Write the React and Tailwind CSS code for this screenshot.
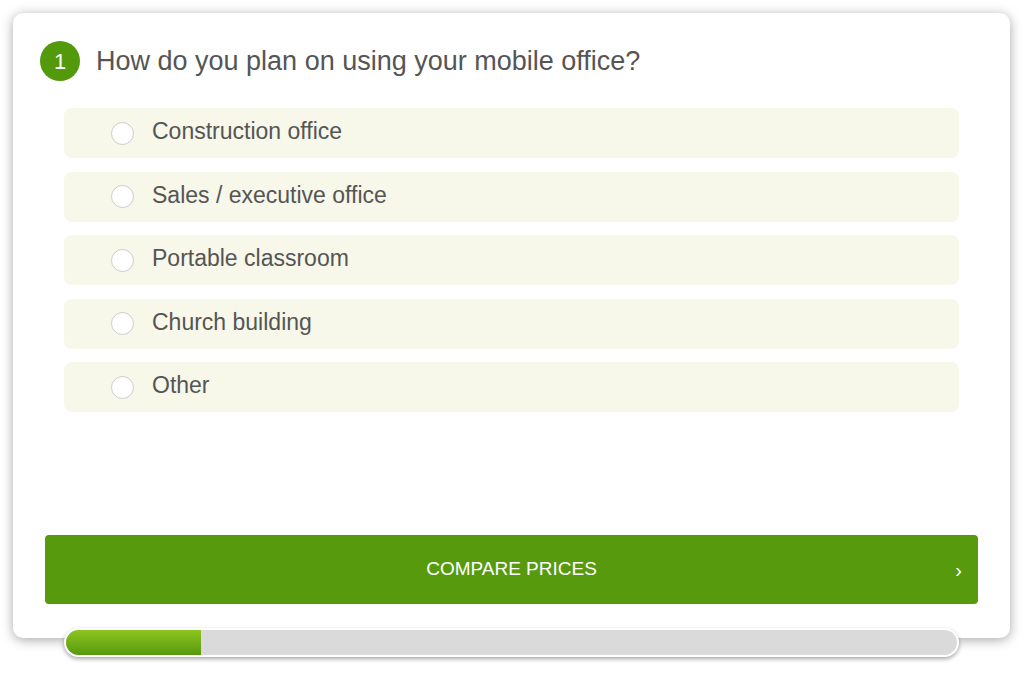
import React, { useState } from 'react';

const options = [
  'Construction office',
  'Sales / executive office',
  'Portable classroom',
  'Church building',
  'Other',
];

const App = () => {
  const [selected, setSelected] = useState(null);

  return (
    <div className="w-[1024px] h-[675px] bg-white pt-[13px] pl-[13px] font-['Liberation_Sans',Arial,sans-serif]">
      <div className="relative z-0 w-[997px] h-[625px] bg-white rounded-[10px] shadow-[0_2px_12px_rgba(0,0,0,0.35)] px-[32px] pt-[28px] pb-[34px] flex flex-col">
        <div className="flex items-center gap-[16px] ml-[-5px]">
          <div className="w-[40px] h-[40px] rounded-full bg-[#529a0c] text-white text-[22px] flex items-center justify-center">
            1
          </div>
          <h2 className="text-[27px] text-[#555555] leading-none">How do you plan on using your mobile office?</h2>
        </div>

        <div className="mt-[27px] mx-[19px] flex flex-col gap-[13.5px]">
          {options.map((opt, i) => (
            <label
              key={opt}
              onClick={() => setSelected(i)}
              className="h-[50px] rounded-[8px] bg-[#f7f7ea] flex items-center pl-[47px] gap-[18px] cursor-pointer"
            >
              <span className="w-[23px] h-[23px] rounded-full bg-white border-[1.5px] border-[#cccccc] flex items-center justify-center">
                {selected === i && <span className="w-[11px] h-[11px] rounded-full bg-[#529a0c]"></span>}
              </span>
              <span className="text-[23px] text-[#555555] leading-none -mt-[3px]">{opt}</span>
            </label>
          ))}
        </div>

        <button className="mt-auto relative h-[69px] w-full rounded-[4px] bg-[#579a0e] text-white text-[19px] flex items-center justify-center">
          COMPARE PRICES
          <span className="absolute right-[16px] top-1/2 -translate-y-1/2 text-[20px]">›</span>
        </button>
      </div>

      <div className="relative z-10 -mt-[10px] ml-[51px] w-[895px] h-[29px] rounded-full bg-[#dadada] border-2 border-white shadow-[0_2px_4px_rgba(0,0,0,0.35)] overflow-hidden">
        <div className="h-full w-[135px] bg-gradient-to-b from-[#8cc420] to-[#579a0e]"></div>
      </div>
    </div>
  );
};

export default App;
